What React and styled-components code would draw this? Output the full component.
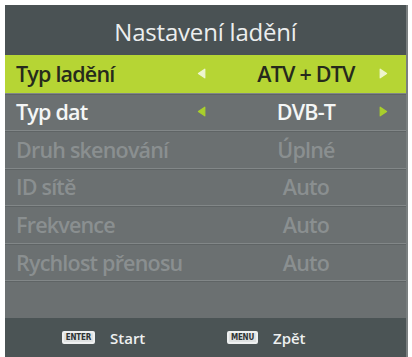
import React from "react";
import styled, { createGlobalStyle } from "styled-components";

const Global = createGlobalStyle`
  html, body {
    margin: 0;
    padding: 0;
    background: #ffffff;
  }
  body {
    font-family: "Open Sans", "Noto Sans", sans-serif;
  }
`;

const Panel = styled.div`
  margin: 5px 4px 0 5px;
  height: 352px;
  display: flex;
  flex-direction: column;
  background: #6b7071;
  border-right: 2px solid #7a7f80;
  box-sizing: border-box;
  overflow: hidden;
`;

const Header = styled.div`
  height: 50px;
  flex: none;
  display: flex;
  align-items: center;
  justify-content: center;
  padding-top: 2px;
  box-sizing: border-box;
  background: #4a5254;
  color: #eceeee;
  font-size: 24px;
  letter-spacing: -0.2px;
`;

const List = styled.div`
  height: 263px;
  flex: none;
  display: grid;
  grid-template-rows: repeat(7, 1fr);
`;

const Row = styled.div`
  display: grid;
  grid-template-columns: 174px 22px 1fr 22px;
  align-items: center;
  padding: 0 12px 0 11px;
  font-size: 21.5px;
  font-weight: 600;
  letter-spacing: -0.8px;
  background: ${(p) => (p.$active ? "#b6d534" : "transparent")};
  color: ${(p) =>
    p.$active ? "#262a1c" : p.$enabled ? "#f4f6f6" : "#8a8f90"};
  border-top: ${(p) => (p.$first || p.$active ? "none" : "1px solid #828788")};
  box-shadow: ${(p) => (p.$first || p.$active ? "none" : "inset 0 1px 0 #5f6465")};
`;

const Label = styled.span`
  white-space: nowrap;
`;

const Value = styled.span`
  text-align: center;
  padding-left: 28px;
  white-space: nowrap;
`;

const Arrow = styled.span`
  display: flex;
  justify-content: center;
  align-items: center;
  svg {
    display: block;
  }
`;

const Footer = styled.div`
  flex: 1;
  display: flex;
  align-items: center;
  background: #4b5455;
  color: #eef0f0;
  font-size: 15px;
  font-weight: 600;
  padding-left: 57px;
`;

const Hint = styled.div`
  display: flex;
  align-items: center;
  gap: 15px;
  width: 165px;
`;

const Key = styled.span`
  display: inline-flex;
  align-items: center;
  justify-content: center;
  width: ${(p) => p.$w}px;
  height: 13px;
  box-sizing: border-box;
  border: 2px solid #eef0f0;
  background: #dfe2e2;
  border-radius: 2px;
  color: #2e3435;
  font-family: "DejaVu Sans Condensed", "DejaVu Sans", sans-serif;
  font-size: 8px;
  font-weight: 700;
  letter-spacing: -0.2px;
`;

function Tri({ dir, color }) {
  return (
    <svg width="9" height="11" viewBox="0 0 9 11">
      {dir === "left" ? (
        <path d="M7.8 1.2 L1.4 5.5 L7.8 9.8 Z" fill={color} stroke={color} strokeLinejoin="round" strokeWidth="1.2" />
      ) : (
        <path d="M1.2 1.2 L7.6 5.5 L1.2 9.8 Z" fill={color} stroke={color} strokeLinejoin="round" strokeWidth="1.2" />
      )}
    </svg>
  );
}

const rows = [
  { label: "Typ ladění", value: "ATV + DTV", active: true, enabled: true },
  { label: "Typ dat", value: "DVB-T", enabled: true },
  { label: "Druh skenování", value: "Úplné" },
  { label: "ID sítě", value: "Auto" },
  { label: "Frekvence", value: "Auto" },
  { label: "Rychlost přenosu", value: "Auto" },
  { label: "", value: "" },
];

export default function App() {
  return (
    <>
      <Global />
      <Panel>
        <Header>Nastavení ladění</Header>
        <List>
          {rows.map((r, i) => {
            const arrowColor = r.active ? "#eef5cf" : "#a9cf2c";
            return (
              <Row key={i} $active={r.active} $enabled={r.enabled} $first={i === 0}>
                <Label>{r.label}</Label>
                <Arrow>{r.enabled && <Tri dir="left" color={arrowColor} />}</Arrow>
                <Value>{r.value}</Value>
                <Arrow>{r.enabled && <Tri dir="right" color={arrowColor} />}</Arrow>
              </Row>
            );
          })}
        </List>
        <Footer>
          <Hint>
            <Key $w={33}>ENTER</Key>
            <span>Start</span>
          </Hint>
          <Hint>
            <Key $w={31}>MENU</Key>
            <span>Zpět</span>
          </Hint>
        </Footer>
      </Panel>
    </>
  );
}
